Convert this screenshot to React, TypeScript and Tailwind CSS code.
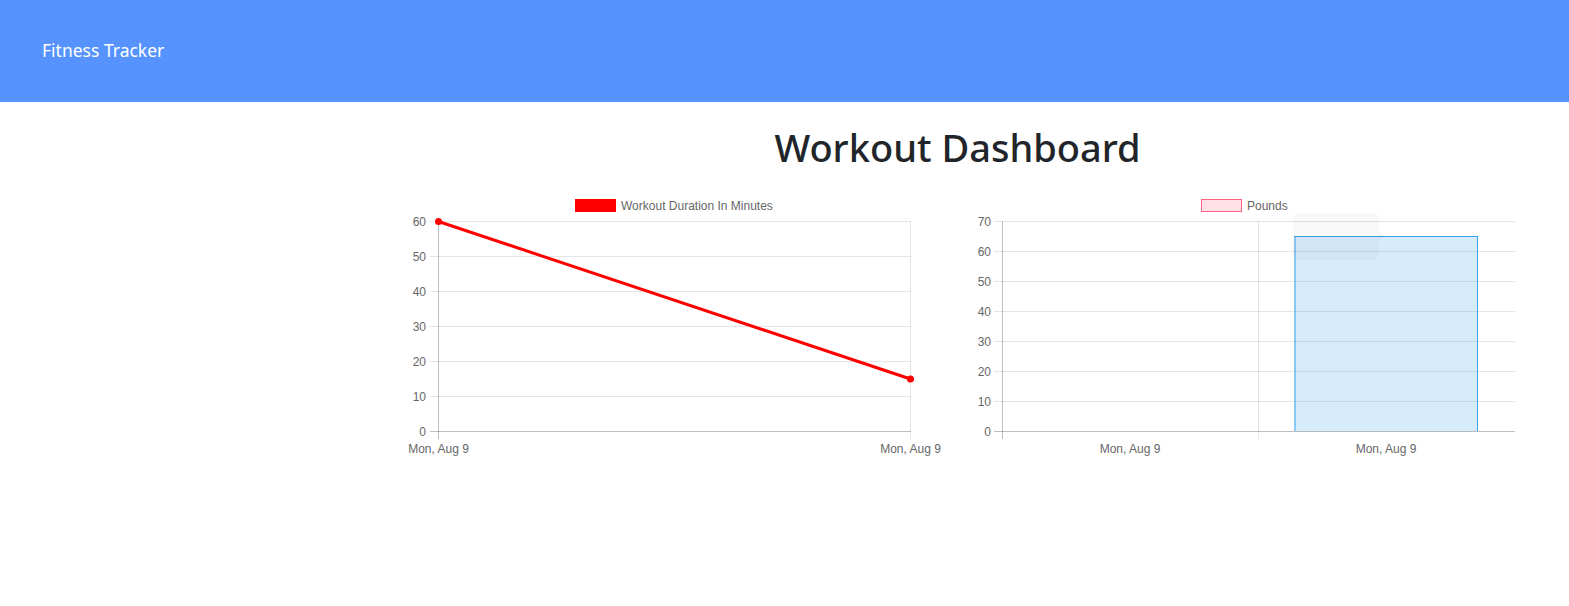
import React from "react";

const lineY = [0, 10, 20, 30, 40, 50, 60];
const barY = [0, 10, 20, 30, 40, 50, 60, 70];

function LineChart() {
  return (
    <svg
      width={560}
      height={270}
      viewBox="395 190 560 270"
      className="block font-['Liberation_Sans',Arial,sans-serif] text-[12px]"
    >
      {/* legend */}
      <rect x={575.5} y={199.5} width={40} height={12} fill="#ff0000" stroke="#ff0000" />
      <text x={621} y={209.5} fill="#666">Workout Duration In Minutes</text>
      {/* horizontal grid */}
      {lineY.map((v, i) => {
        const y = 431.5 - i * 35;
        return (
          <g key={v}>
            <line
              x1={430}
              x2={911}
              y1={y}
              y2={y}
              stroke={i === 0 ? "rgba(0,0,0,0.25)" : "rgba(0,0,0,0.1)"}
            />
            <text x={426} y={y + 4} textAnchor="end" fill="#666">
              {v}
            </text>
          </g>
        );
      })}
      {/* vertical grid */}
      <line x1={438.5} x2={438.5} y1={221.5} y2={439} stroke="rgba(0,0,0,0.25)" />
      <line x1={910.5} x2={910.5} y1={221.5} y2={439} stroke="rgba(0,0,0,0.1)" />
      <text x={438.5} y={452.5} textAnchor="middle" fill="#666">Mon, Aug 9</text>
      <text x={910.5} y={452.5} textAnchor="middle" fill="#666">Mon, Aug 9</text>
      {/* data */}
      <line x1={438.5} y1={221.5} x2={910.5} y2={379} stroke="#ff0000" strokeWidth={3} />
      <circle cx={438.5} cy={221.5} r={3.5} fill="#ff0000" />
      <circle cx={910.5} cy={379} r={3.5} fill="#ff0000" />
    </svg>
  );
}

function BarChart() {
  return (
    <svg
      width={565}
      height={270}
      viewBox="955 190 565 270"
      className="block font-['Liberation_Sans',Arial,sans-serif] text-[12px]"
    >
      {/* legend */}
      <rect
        x={1201.5}
        y={199.5}
        width={40}
        height={12}
        fill="rgba(255,99,132,0.2)"
        stroke="rgba(255,99,132,1)"
      />
      <text x={1247} y={209.5} fill="#666">Pounds</text>
      {/* horizontal grid */}
      {barY.map((v, i) => {
        const y = 431.5 - i * 30;
        return (
          <g key={v}>
            <line
              x1={994}
              x2={1515}
              y1={y}
              y2={y}
              stroke={i === 0 ? "rgba(0,0,0,0.25)" : "rgba(0,0,0,0.1)"}
            />
            <text x={991} y={y + 4} textAnchor="end" fill="#666">
              {v}
            </text>
          </g>
        );
      })}
      <line x1={1002.5} x2={1002.5} y1={221.5} y2={439} stroke="rgba(0,0,0,0.25)" />
      <line x1={1258.5} x2={1258.5} y1={221.5} y2={439} stroke="rgba(0,0,0,0.1)" />
      <text x={1130} y={452.5} textAnchor="middle" fill="#666">Mon, Aug 9</text>
      <text x={1386} y={452.5} textAnchor="middle" fill="#666">Mon, Aug 9</text>
      {/* bar */}
      <rect x={1294.5} y={236.5} width={183} height={195} fill="rgba(54,162,235,0.2)" />
      <line x1={1294} x2={1478} y1={236.5} y2={236.5} stroke="rgb(54,162,235)" />
      <line x1={1477.5} x2={1477.5} y1={236.5} y2={431} stroke="rgb(54,162,235)" />
      <line x1={1295} x2={1295} y1={237} y2={431} stroke="rgba(54,162,235,0.5)" strokeWidth={2} />
      {/* fading tooltip */}
      <g opacity={0.025}>
        <rect x={1293} y={213} width={86} height={47} rx={6} fill="#000" />
        <path d="M1379 230 L1385 236 L1379 242 Z" fill="#000" />
        <rect x={1299} y={233} width={10} height={10} fill="#000" />
        <text x={1314} y={243} fill="#000">Pounds: 65</text>
      </g>
    </svg>
  );
}

export default function App() {
  return (
    <div className="min-h-[606px] bg-white">
      <header className="flex h-[102px] items-center bg-[#5693fe] px-[42px]">
        <span className="font-['Noto_Sans',sans-serif] text-[17.5px] text-white leading-none">
          Fitness Tracker
        </span>
      </header>
      <main className="ml-[395px] w-[1125px]">
        <h1 className="mt-[23px] mb-[19px] text-center font-['Noto_Sans',sans-serif] text-[38px] font-medium leading-[1.2] text-[#212529]">
          Workout Dashboard
        </h1>
        <div className="flex">
          <LineChart />
          <BarChart />
        </div>
      </main>
    </div>
  );
}
